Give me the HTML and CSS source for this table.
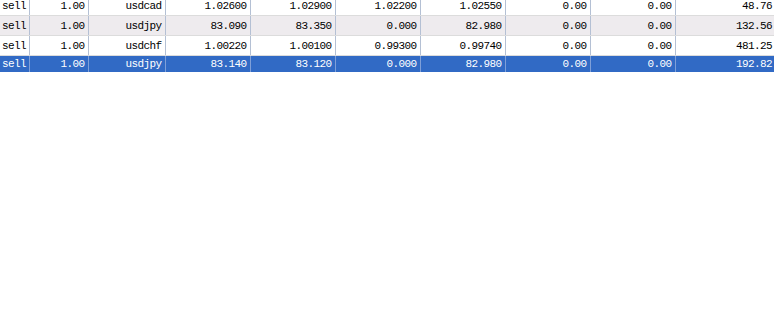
FILE: index.html
```html
<!DOCTYPE html>
<html>
<head>
<meta charset="utf-8">
<link rel="stylesheet" href="styles.css">
</head>
<body>
<table class="grid">
  <colgroup>
    <col class="c-type"><col class="c-lots"><col class="c-sym">
    <col class="c-num"><col class="c-num"><col class="c-num"><col class="c-num">
    <col class="c-num"><col class="c-num"><col class="c-last">
  </colgroup>
  <tbody>
    <tr class="row first">
      <td class="txt">sell</td><td>1.00</td><td>usdcad</td><td>1.02600</td><td>1.02900</td><td>1.02200</td><td>1.02550</td><td>0.00</td><td>0.00</td><td>48.76</td>
    </tr>
    <tr class="row alt">
      <td class="txt">sell</td><td>1.00</td><td>usdjpy</td><td>83.090</td><td>83.350</td><td>0.000</td><td>82.980</td><td>0.00</td><td>0.00</td><td>132.56</td>
    </tr>
    <tr class="row">
      <td class="txt">sell</td><td>1.00</td><td>usdchf</td><td>1.00220</td><td>1.00100</td><td>0.99300</td><td>0.99740</td><td>0.00</td><td>0.00</td><td>481.25</td>
    </tr>
    <tr class="row selected">
      <td class="txt">sell</td><td>1.00</td><td>usdjpy</td><td>83.140</td><td>83.120</td><td>0.000</td><td>82.980</td><td>0.00</td><td>0.00</td><td>192.82</td>
    </tr>
  </tbody>
</table>
</body>
</html>
```

FILE: styles.css
```css
html, body {
  margin: 0;
  padding: 0;
  background: #ffffff;
}

.grid {
  width: 774px;
  table-layout: fixed;
  border-collapse: collapse;
  margin-top: -4px;
  font-family: "Liberation Mono", "DejaVu Sans Mono", monospace;
  font-size: 11px;
  letter-spacing: -0.6px;
  color: #000000;
}

.c-type { width: 29px; }
.c-lots { width: 59px; }
.c-sym  { width: 77px; }
.c-num  { width: 85px; }
.c-last { width: 99px; }

.grid td {
  height: 19px;
  padding: 0 3px 0 2px;
  text-align: right;
  white-space: nowrap;
  overflow: hidden;
  border-right: 1px solid #b4c0d4;
  border-bottom: 1px solid #dcdcdc;
  vertical-align: middle;
  line-height: 12px;
}

.grid td:last-child {
  border-right: none;
  padding-right: 2px;
}

.grid td.txt {
  text-align: left;
}

.row.alt td {
  background: #eeebee;
}

.row.selected td {
  background: #316ac5;
  color: #ffffff;
  height: 16px;
  border-bottom: none;
  border-right-color: #7f9fd8;
}
```
